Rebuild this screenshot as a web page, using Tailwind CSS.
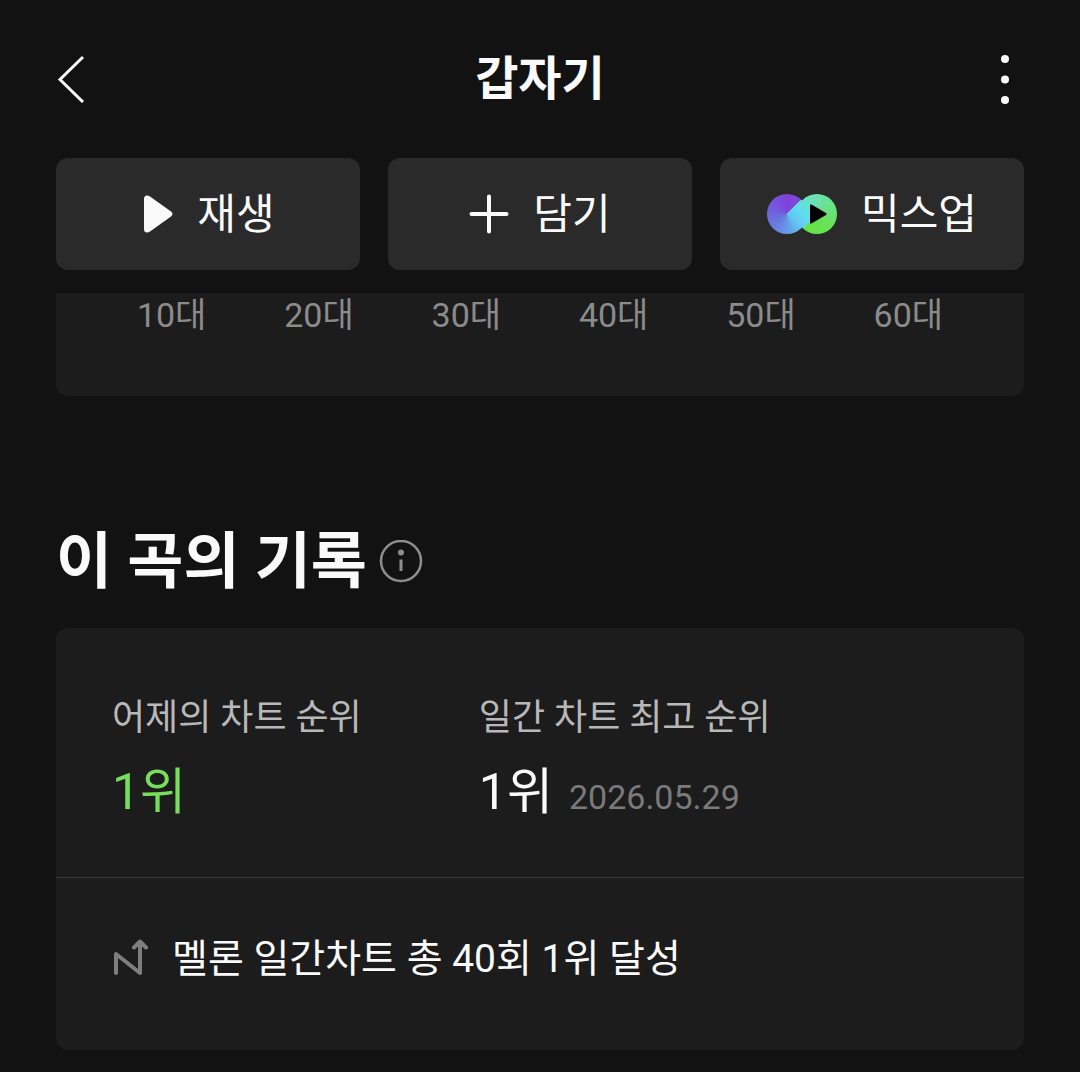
<!DOCTYPE html>
<html lang="ko">
  <head>
    <meta charset="UTF-8" />
    <meta name="viewport" content="width=device-width, initial-scale=1.0" />
    <title>갑자기</title>
    <script src="https://cdn.jsdelivr.net/npm/@tailwindcss/browser@4"></script>
    <style>
      body {
        font-family: Roboto, 'Noto Sans CJK KR', sans-serif;
      }
    </style>
  </head>
  <body class="bg-[#121212] text-[#fafafa] min-h-screen px-14">
    <header class="flex items-center justify-between h-[158px]">
      <button type="button" aria-label="뒤로" class="w-8 h-12">
        <svg class="w-8 h-12" viewBox="0 0 32 48" fill="none" stroke="currentColor" stroke-width="3">
          <path d="M27 2 L4 24.500 L27 47" />
        </svg>
      </button>
      <h1 class="text-[47px] leading-[68px] font-bold">갑자기</h1>
      <button type="button" aria-label="더보기" class="w-8 h-12 flex justify-center">
        <svg class="w-8 h-12 overflow-visible" viewBox="0 0 32 48" fill="currentColor">
          <circle cx="13" cy="4" r="4" />
          <circle cx="13" cy="24.500" r="4" />
          <circle cx="13" cy="45" r="4" />
        </svg>
      </button>
    </header>

    <div class="grid grid-cols-3 gap-7">
      <button type="button" class="h-28 rounded-xl bg-[#2a2a2a] flex items-center justify-center gap-6 text-[42px] leading-[60px]">
        <svg class="w-8 h-10" viewBox="0 0 32 40" fill="currentColor">
          <path d="M3 5 Q3 1.500 6 1.500 Q7.500 1.500 9 2.500 L30 17.500 Q33 20 30 22.500 L9 37.500 Q7.500 38.500 6 38.500 Q3 38.500 3 35 Z" />
        </svg>
        <span class="pt-0.5">재생</span>
      </button>
      <button type="button" class="h-28 rounded-xl bg-[#2a2a2a] flex items-center justify-center gap-6 text-[42px] leading-[60px]">
        <svg class="w-10 h-10" viewBox="0 0 40 40" fill="none" stroke="currentColor" stroke-width="4" stroke-linecap="round">
          <path d="M20 2.500 V37.500 M2.500 20 H37.500" />
        </svg>
        <span class="pt-0.5">담기</span>
      </button>
      <button type="button" class="h-28 rounded-xl bg-[#2a2a2a] flex items-center justify-center gap-6 text-[42px] leading-[60px]">
        <span class="relative w-[70px] h-10">
          <span class="absolute left-0 top-0 size-10 rounded-full bg-[conic-gradient(from_45deg,#62d8f2_0deg,#62c4f0_90deg,#6699e6_135deg,#677ddd_180deg,#6c68dc_225deg,#7a50dc_270deg,#8040dc_315deg,#7a4cdc_360deg)]"></span>
          <span class="absolute right-0 top-0 size-10 rounded-full bg-[conic-gradient(from_225deg,#62d8f2_0deg,#66e2cc_90deg,#6ce2ac_135deg,#6be084_200deg,#68e25c_260deg,#66e344_360deg)]"></span>
          <svg class="absolute left-0 top-0 w-[70px] h-10" viewBox="0 0 70 40">
            <defs>
              <linearGradient id="band" gradientUnits="userSpaceOnUse" x1="27" y1="27" x2="43" y2="13">
                <stop offset="0" stop-color="#62c4f0" />
                <stop offset="0.500" stop-color="#60dcf2" />
                <stop offset="1" stop-color="#66e2cc" />
              </linearGradient>
            </defs>
            <path d="M20 20 L36 6 L50 20 L34 34 Z" fill="url(#band)" />
            <path d="M43 11.500 Q43 10 44.500 10.500 L59 19 Q60.500 20 59 21 L44.500 29.500 Q43 30 43 28.500 Z" fill="#000" />
          </svg>
        </span>
        <span class="pt-0.5">믹스업</span>
      </button>
    </div>

    <ul class="mt-[23px] h-[103px] rounded-b-xl bg-[#1c1c1c] px-[42px] grid grid-cols-6 text-center text-[34px] leading-[44px] text-[#8b8b8b]">
      <li>10대</li>
      <li>20대</li>
      <li>30대</li>
      <li>40대</li>
      <li>50대</li>
      <li>60대</li>
    </ul>

    <section class="pt-[124px]">
      <div class="flex items-center gap-3">
        <h2 class="text-[61px] leading-[84px] font-bold">이 곡의 기록</h2>
        <button type="button" aria-label="안내" class="size-11">
          <svg class="size-11" viewBox="0 0 44 44" fill="none" stroke="#8e8e8e">
            <circle cx="22" cy="21" r="20" stroke-width="2.500" />
            <circle cx="22" cy="12.500" r="3" fill="#8e8e8e" stroke="none" />
            <path d="M22 19.500 V31" stroke-width="3" />
          </svg>
        </button>
      </div>

      <div class="mt-6 rounded-xl bg-[#1c1c1c]">
        <dl class="grid grid-cols-[3fr_4fr] px-14 pt-16 h-[249px]">
          <div>
            <dt class="text-[36px] leading-[52px] text-[#b8b8b8]">어제의 차트 순위</dt>
            <dd class="mt-[14px] text-[50px] leading-[68px] text-[#78dc5c]">1위</dd>
          </div>
          <div>
            <dt class="text-[36px] leading-[52px] text-[#b8b8b8]">일간 차트 최고 순위</dt>
            <dd class="mt-[14px] flex items-baseline gap-4 text-[50px] leading-[68px]">
              1위
              <time datetime="2026-05-29" class="text-[34px] text-[#7a7a7a]">2026.05.29</time>
            </dd>
          </div>
        </dl>
        <div class="flex items-center gap-6 border-t border-[#383838] px-14 pb-[10px] h-[173px]">
          <svg class="w-9 h-10" viewBox="0 0 36 40" fill="none" stroke="#7e7e7e" stroke-width="4" stroke-linecap="round" stroke-linejoin="round">
            <path d="M4 34 V15 L28 34 V3 M22 8.500 L28 2.500 L34 8.500" />
          </svg>
          <p class="text-[39px] leading-[56px]">멜론 일간차트 총 40회 1위 달성</p>
        </div>
      </div>
    </section>
  </body>
</html>
